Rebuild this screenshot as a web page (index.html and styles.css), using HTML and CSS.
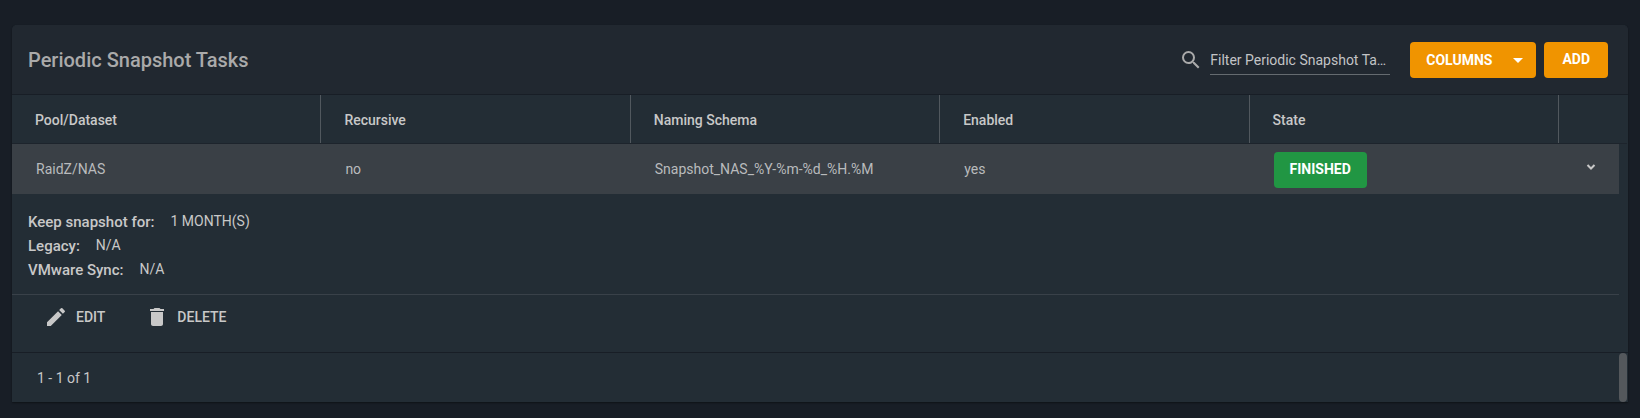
FILE: index.html
```html
<!DOCTYPE html>
<html lang="en">
<head>
<meta charset="utf-8">
<title>Periodic Snapshot Tasks</title>
<link rel="stylesheet" href="styles.css">
</head>
<body>
<main class="card">
  <header class="toolbar">
    <h1 class="title">Periodic Snapshot Tasks</h1>
    <label class="search">
      <svg class="icon" viewBox="0 0 24 24" role="img" aria-label="Search"><path d="M15.5 14h-.79l-.28-.27A6.47 6.47 0 0 0 16 9.5 6.5 6.5 0 1 0 9.5 16c1.61 0 3.09-.59 4.23-1.57l.27.28v.79l5 4.99L20.49 19l-4.99-5zm-6 0a4.5 4.5 0 1 1 0-9 4.5 4.5 0 0 1 0 9z"/></svg>
      <input class="search-input" type="text" placeholder="Filter Periodic Snapshot Tasks">
    </label>
    <button class="button columns" type="button">COLUMNS
      <svg class="icon" viewBox="0 0 24 24" aria-hidden="true"><path d="M7 10l5 5 5-5z"/></svg>
    </button>
    <button class="button add" type="button">ADD</button>
  </header>

  <table class="tasks">
    <colgroup><col><col><col><col><col><col class="col-toggle"><col class="col-gutter"></colgroup>
    <thead>
      <tr>
        <th scope="col">Pool/Dataset</th>
        <th scope="col">Recursive</th>
        <th scope="col">Naming Schema</th>
        <th scope="col">Enabled</th>
        <th scope="col">State</th>
        <th colspan="2"></th>
      </tr>
    </thead>
    <tbody>
      <tr class="task">
        <td>RaidZ/NAS</td>
        <td>no</td>
        <td>Snapshot_NAS_%Y-%m-%d_%H.%M</td>
        <td>yes</td>
        <td class="state"><button class="button finished" type="button">FINISHED</button></td>
        <td class="toggle-cell"><button class="toggle" type="button" aria-label="Collapse row"><svg class="chevron" viewBox="0 0 10 6" aria-hidden="true"><path d="M1.5 1L5 4.500 8.500 1"/></svg></button></td>
        <td class="gutter"></td>
      </tr>
      <tr>
        <td class="detail" colspan="6">
          <dl class="facts">
            <div class="fact"><dt>Keep snapshot for:</dt><dd>1 MONTH(S)</dd></div>
            <div class="fact"><dt>Legacy:</dt><dd>N/A</dd></div>
            <div class="fact"><dt>VMware Sync:</dt><dd>N/A</dd></div>
          </dl>
          <div class="actions">
            <button class="action" type="button"><svg class="icon" viewBox="0 0 24 24" aria-hidden="true"><path d="M3 17.25V21h3.75L17.81 9.94l-3.75-3.75L3 17.25zM20.71 7.04a1 1 0 0 0 0-1.41l-2.34-2.34a1 1 0 0 0-1.41 0l-1.83 1.83 3.75 3.75 1.83-1.83z"/></svg>EDIT</button>
            <button class="action" type="button"><svg class="icon" viewBox="0 0 24 24" aria-hidden="true"><path d="M6 19c0 1.1.9 2 2 2h8c1.1 0 2-.9 2-2V7H6v12zM19 4h-3.5l-1-1h-5l-1 1H5v2h14V4z"/></svg>DELETE</button>
          </div>
        </td>
        <td class="gutter"></td>
      </tr>
    </tbody>
  </table>

  <footer class="footer">
    <span class="count">1 - 1 of 1</span>
    <span class="scroll-thumb"></span>
  </footer>
</main>
</body>
</html>
```
FILE: styles.css
```css
* { box-sizing: border-box; }

body {
  margin: 0;
  padding: 25px 12px 16px;
  background: #181e26;
  color: #c8c8c8;
  font: 14px/20px Roboto, sans-serif;
}

button, input { font: inherit; color: inherit; }
button { border: 0; padding: 0; background: none; cursor: pointer; }

.icon { width: 24px; height: 24px; fill: currentColor; flex: none; }

.card {
  padding-right: 1px;
  border-radius: 5px 5px 0 0;
  background: #232d35;
  box-shadow: 0 1px 2px rgba(0, 0, 0, 0.4);
}

.toolbar {
  display: flex;
  align-items: center;
  height: 70px;
  margin-right: -1px;
  padding: 0 20px 0 16px;
  border-bottom: 1px solid #181e26;
  border-radius: 5px 5px 0 0;
  background: #212830;
}

.title {
  margin: 0 auto 0 0;
  color: #aaa;
  font-size: 20px;
  line-height: 28px;
  font-weight: 500;
}

.search { display: flex; align-items: center; gap: 7px; margin-right: 20px; padding-top: 1px; color: #aaa; }

.search-input {
  width: 180px;
  height: 29px;
  padding: 0;
  border: 0;
  border-bottom: 1px solid #656b70;
  border-radius: 0;
  outline: 0;
  background: none;
  text-overflow: ellipsis;
}
.search-input::placeholder { color: #c3c4c6; opacity: 1; }

.button {
  height: 36px;
  padding: 0 16px;
  border-radius: 4px;
  color: #fff;
  font-weight: 700;
}
.columns {
  display: flex;
  align-items: center;
  gap: 14px;
  margin-right: 8px;
  padding: 0 6px 0 16px;
  background: #f09400;
}
.add { padding: 0 18px 2px; background: #f09400; }
.finished { display: block; padding-bottom: 2px; background: #219643; }

.tasks { width: 100%; border-collapse: separate; border-spacing: 0; table-layout: fixed; }
.col-toggle { width: 60px; }
.col-gutter { width: 8px; }
.tasks td { padding: 0; }

.tasks th {
  height: 49px;
  padding: 2px 23px 0;
  border-bottom: 1px solid #1d242c;
  background: linear-gradient(#51585e, #51585e) right / 1px 100% no-repeat;
  text-align: left;
  font-weight: 500;
}
.tasks th:last-child { background: none; }

.tasks .task td { height: 50px; padding: 0 24px; background: #3a4046; color: #b9bbbd; }
.tasks .task .state { padding-top: 2px; }
.tasks .task .toggle-cell { padding: 0 0 4px 3px; text-align: center; }
.tasks .task .gutter { padding: 0; background: none; }

.toggle { display: inline-grid; place-items: center; width: 24px; height: 24px; }
.chevron { width: 10px; height: 6px; fill: none; stroke: #c8c8c8; stroke-width: 2; }

.facts { margin: 0; padding: 16px 16px 12px; }
.fact { display: flex; gap: 16px; height: 24px; }
.fact dt { font-size: 15px; line-height: 24px; font-weight: 500; }
.fact dd { margin: 0; line-height: 22px; }

.actions {
  display: flex;
  gap: 40px;
  padding: 10px 32px 23px;
  border-top: 1px solid #394149;
}
.action { display: flex; align-items: center; gap: 8px; font-weight: 500; }

.footer {
  display: flex;
  justify-content: space-between;
  height: 50px;
  margin-right: -1px;
  padding: 0 1px 0 25px;
  border-top: 1px solid #181e26;
}
.count { align-self: center; }
.scroll-thumb { width: 8px; border-radius: 4px; background: #54585c; }
```
